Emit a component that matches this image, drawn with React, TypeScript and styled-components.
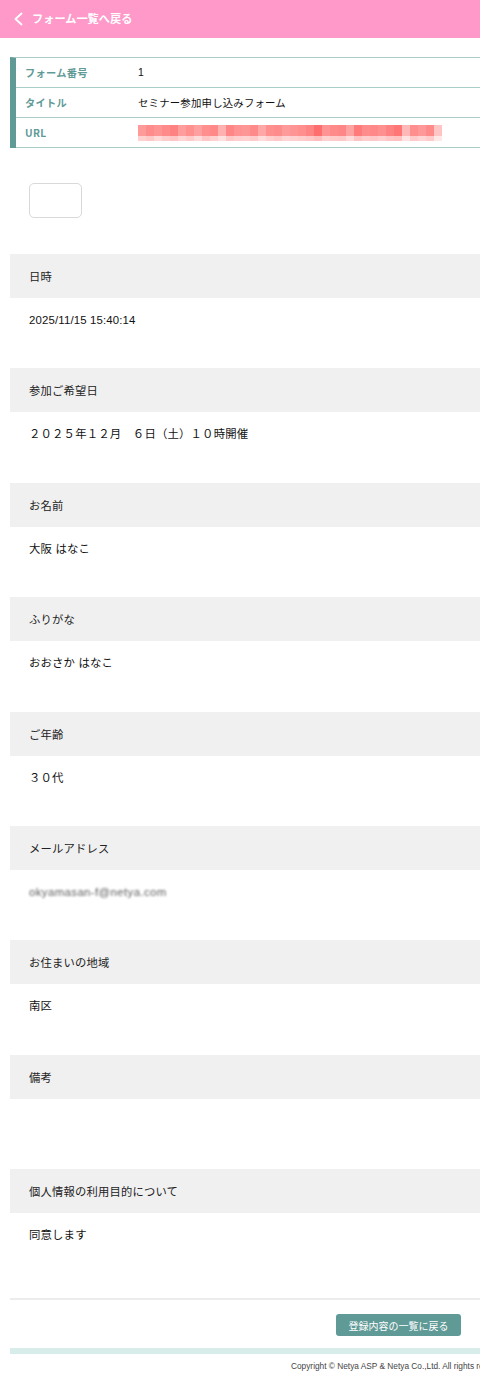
import React from "react";
import styled, { createGlobalStyle } from "styled-components";

const GlobalStyle = createGlobalStyle`
  html, body {
    margin: 0;
    padding: 0;
    background: #ffffff;
    overflow-x: hidden;
  }
  body {
    font-family: "Liberation Sans", "Noto Sans CJK JP", sans-serif;
    color: #222;
  }
`;

const Page = styled.div`
  width: 480px;
  min-height: 1382px;
  overflow: hidden;
`;

const TopBar = styled.a`
  display: flex;
  align-items: center;
  gap: 8px;
  height: 38px;
  padding-left: 13px;
  background: #fe99c9;
  color: #ffffff;
  font-family: "Noto Sans CJK JP", sans-serif;
  font-weight: 700;
  font-size: 11.2px;
  line-height: 1;
  text-decoration: none;
`;

const Main = styled.main`
  padding-left: 10px;
  display: flex;
  flex-direction: column;
`;

const InfoTable = styled.div`
  margin-top: 19px;
  border-top: 1px solid #a9ceca;
  border-left: 6px solid #5f9a97;
`;

const InfoRow = styled.div`
  display: grid;
  grid-template-columns: 113px 1fr;
  align-items: center;
  height: 29px;
  border-bottom: 1px solid #a9ceca;
  padding-left: 9px;
`;

const InfoLabel = styled.div`
  font-family: "Noto Sans CJK JP", sans-serif;
  font-weight: 700;
  font-size: 10.2px;
  color: #5f9a97;
  letter-spacing: 0.3px;
`;

const InfoValue = styled.div`
  font-family: "Liberation Sans", "Noto Sans CJK JP", sans-serif;
  font-size: 10.4px;
  color: #111;
  letter-spacing: 0.2px;
  display: flex;
  align-items: center;
`;

const BlankBox = styled.div`
  margin: 35px 0 0 19px;
  width: 53px;
  height: 35px;
  box-sizing: border-box;
  border: 1px solid #d9d9d9;
  border-radius: 5px;
`;

const Sections = styled.div`
  margin-top: 36px;
  display: flex;
  flex-direction: column;
`;

const SectionHead = styled.div`
  height: 44px;
  display: flex;
  align-items: center;
  padding-left: 19px;
  background: #f0f0f0;
  font-family: "Noto Sans CJK JP", sans-serif;
  font-size: 11.3px;
  color: #222;
  letter-spacing: 0.2px;
`;

const SectionValue = styled.div<{ $blur?: boolean }>`
  height: 70.4px;
  box-sizing: border-box;
  padding: 14px 0 0 19px;
  font-size: 11.4px;
  line-height: 17px;
  color: ${(p) => (p.$blur ? "#5c5c5c" : "#111")};
  letter-spacing: ${(p) => (p.$blur ? "0.4px" : "0.15px")};
  white-space: pre;
  filter: ${(p) => (p.$blur ? "blur(1.2px)" : "none")};
`;

const Divider = styled.hr`
  margin: 14.5px 0 0 0;
  height: 2px;
  border: none;
  background: #ececec;
`;

const ButtonRow = styled.div`
  display: flex;
  justify-content: flex-end;
  padding: 14px 19px 0 0;
`;

const BackButton = styled.button`
  width: 125px;
  height: 22px;
  border: none;
  border-radius: 3px;
  background: #5f9a97;
  color: #ffffff;
  font-family: "Noto Sans CJK JP", sans-serif;
  font-size: 10px;
  padding: 0;
  cursor: pointer;
`;

const FooterBar = styled.div`
  margin-top: 12px;
  height: 6px;
  background: #d8ecea;
`;

const Copyright = styled.div`
  padding: 7px 0 0 281px;
  white-space: nowrap;
  font-family: "Liberation Sans", sans-serif;
  font-size: 8.3px;
  color: #444;
`;

const Chevron = () => (
  <svg width="11" height="14" viewBox="0 0 11 14" fill="none">
    <polyline
      points="8.5,1.5 2.5,7 8.5,12.5"
      stroke="#ffffff"
      strokeWidth="1.8"
      strokeLinecap="round"
      strokeLinejoin="round"
    />
  </svg>
);

const mosaicTop = [
  "#ff9a9a", "#ff8c8c", "#ff9494", "#ff8a8a", "#ff8282", "#ff9c9c", "#ff9090",
  "#ffa0a0", "#ff8e8e", "#ff8888", "#ffb0b0", "#ff8686", "#ff9292", "#ff9696",
  "#ff8a8a", "#ffa6a6", "#ff9090", "#ff8c8c", "#ff9a9a", "#ff9494", "#ff8e8e",
  "#ff8484", "#ff6e6e", "#ff9292", "#ff8a8a", "#ff8686", "#ffa2a2", "#ff7a7a",
  "#ff8c8c", "#ff8888", "#ff9090", "#ff8282", "#ff7676", "#ffb8b8", "#ff8e8e",
  "#ff9898", "#ff8a8a", "#ffc4c4",
];
const mosaicBottom = [
  "#ffd0d0", "#ffc8c8", "#ffd8d8", "#ffcccc", "#ffc4c4", "#ffd4d4", "#ffcaca",
  "#ffdada", "#ffc6c6", "#ffd0d0", "#ffe0e0", "#ffc8c8", "#ffcece", "#ffd2d2",
  "#ffcaca", "#ffdcdc", "#ffcece", "#ffc8c8", "#ffd4d4", "#ffd0d0", "#ffcccc",
  "#ffc6c6", "#ffbcbc", "#ffd0d0", "#ffcaca", "#ffc8c8", "#ffdada", "#ffc2c2",
  "#ffcccc", "#ffc8c8", "#ffcece", "#ffc4c4", "#ffc0c0", "#ffe2e2", "#ffcaca",
  "#ffd4d4", "#ffcaca", "#ffe8e8",
];

const UrlMosaic = () => (
  <svg width="304" height="16" viewBox="0 0 304 16" style={{ display: "block" }}>
    {mosaicTop.map((c, i) => (
      <rect key={`t${i}`} x={i * 8} y={0} width={8} height={11} fill={c} />
    ))}
    {mosaicBottom.map((c, i) => (
      <rect key={`b${i}`} x={i * 8} y={11} width={8} height={5} fill={c} />
    ))}
  </svg>
);

type Item = { label: string; value: string; blur?: boolean };

const items: Item[] = [
  { label: "日時", value: "2025/11/15 15:40:14" },
  { label: "参加ご希望日", value: "２０２５年１２月　６日（土）１０時開催" },
  { label: "お名前", value: "大阪 はなこ" },
  { label: "ふりがな", value: "おおさか はなこ" },
  { label: "ご年齢", value: "３０代" },
  { label: "メールアドレス", value: "okyamasan-f@netya.com", blur: true },
  { label: "お住まいの地域", value: "南区" },
  { label: "備考", value: "" },
  { label: "個人情報の利用目的について", value: "同意します" },
];

export default function App() {
  return (
    <Page>
      <GlobalStyle />
      <TopBar href="#">
        <Chevron />
        <span>フォーム一覧へ戻る</span>
      </TopBar>
      <Main>
        <InfoTable>
          <InfoRow>
            <InfoLabel>フォーム番号</InfoLabel>
            <InfoValue>1</InfoValue>
          </InfoRow>
          <InfoRow>
            <InfoLabel>タイトル</InfoLabel>
            <InfoValue>セミナー参加申し込みフォーム</InfoValue>
          </InfoRow>
          <InfoRow>
            <InfoLabel>URL</InfoLabel>
            <InfoValue>
              <UrlMosaic />
            </InfoValue>
          </InfoRow>
        </InfoTable>
        <BlankBox />
        <Sections>
          {items.map((it) => (
            <React.Fragment key={it.label}>
              <SectionHead>{it.label}</SectionHead>
              <SectionValue $blur={it.blur}>{it.value}</SectionValue>
            </React.Fragment>
          ))}
        </Sections>
        <Divider />
        <ButtonRow>
          <BackButton>登録内容の一覧に戻る</BackButton>
        </ButtonRow>
        <FooterBar />
        <Copyright>Copyright © Netya ASP &amp; Netya Co.,Ltd. All rights reserved.</Copyright>
      </Main>
    </Page>
  );
}
